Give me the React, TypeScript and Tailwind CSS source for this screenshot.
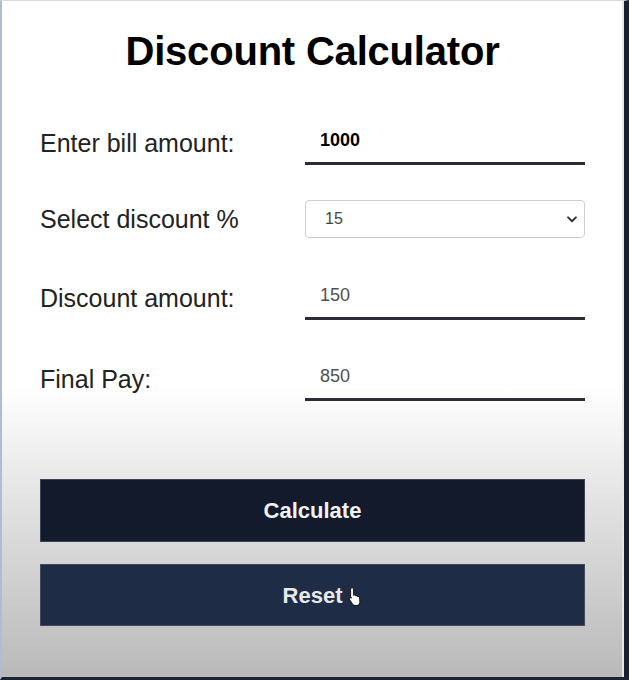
import { useState } from 'react';

function Row({ label, children, className = '' }: { label: string; children: React.ReactNode; className?: string }) {
  return (
    <div className={`flex items-center h-[44px] ${className}`}>
      <label className="w-[265px] text-[25px] text-[#222] leading-none">{label}</label>
      <div className="flex-1 h-full flex items-center">{children}</div>
    </div>
  );
}

export default function App() {
  const [bill, setBill] = useState('1000');
  const [pct, setPct] = useState('15');

  return (
    <div className="w-[629px] h-[680px] overflow-hidden border-l-2 border-l-[#b3bbcc] border-t border-t-[#d8dbe2] border-b-[3px] border-b-[#1c2333] border-r-[5px] border-r-[#1a2030] font-['Liberation_Sans',Arial,sans-serif]">
      <div className="h-full border-r-2 border-r-[#e6e6e6] bg-linear-to-b from-white from-[57%] to-[#b9b9b9] pl-[38px] pr-[37px]">
        <h1 className="pt-[30px] text-[40px] leading-none font-bold text-black text-center tracking-[-0.2px]">
          Discount Calculator
        </h1>

        <Row label="Enter bill amount:" className="mt-[50px]">
          <input
            value={bill}
            onChange={(e) => setBill(e.target.value)}
            className="w-full h-full pl-[15px] pb-[2px] bg-transparent border-b-[3px] border-[#2b2c38] text-[18px] font-bold text-black outline-none"
          />
        </Row>

        <Row label="Select discount %" className="mt-[32px]">
          <div className="relative w-full">
            <select
              value={pct}
              onChange={(e) => setPct(e.target.value)}
              className="w-full h-[38px] appearance-none bg-white border border-[#cfcfcf] rounded-[4px] pl-[19px] text-[16px] text-[#444] outline-none"
            >
              <option value="5">5</option>
              <option value="10">10</option>
              <option value="15">15</option>
              <option value="20">20</option>
            </select>
            <svg
              viewBox="0 0 12 8"
              className="absolute right-[7px] top-[16px] w-[12px] h-[7px] pointer-events-none"
            >
              <path d="M1.5 1.5 6 6l4.5-4.5" fill="none" stroke="#333" strokeWidth={2.2} strokeLinecap="round" strokeLinejoin="round" />
            </svg>
          </div>
        </Row>

        <Row label="Discount amount:" className="mt-[35px]">
          <input
            readOnly
            value="150"
            className="w-full h-full pl-[15px] pb-[2px] bg-transparent border-b-[3px] border-[#2b2c38] text-[18px] text-[#505050] outline-none"
          />
        </Row>

        <Row label="Final Pay:" className="mt-[37px]">
          <input
            readOnly
            value="850"
            className="w-full h-full pl-[15px] pb-[2px] bg-transparent border-b-[3px] border-[#2b2c38] text-[18px] text-[#505050] outline-none"
          />
        </Row>

        <div className="mt-[78px] flex flex-col gap-[22px]">
          <button className="h-[63px] w-full bg-[#121a2b] border border-[#3b4253] text-[22px] font-bold text-[#f2f2f2]">
            Calculate
          </button>
          <button className="relative h-[62px] w-full bg-[#1e2c46] border border-[#3f4a5e] text-[22px] font-bold text-[#e8e8e8]">
            Reset
            <svg viewBox="0 0 12 18" className="absolute left-[307px] top-[21px] w-[14px] h-[21px]">
              <path
                d="M3.5 1.5c.8 0 1.3.6 1.3 1.3v5l.3-.1c.7-.3 1.4 0 1.6.6.7-.2 1.4.1 1.6.7.7-.2 1.5.2 1.6.9l.3 3.3c.2 1.9-.9 3.6-2.7 3.6H6.2c-1 0-1.8-.5-2.4-1.3L1.2 11.7c-.4-.6-.2-1.3.4-1.6.5-.3 1.2-.1 1.5.4l-.9-1.2V2.8c0-.7.5-1.3 1.3-1.3z"
                fill="#fafafa"
                stroke="#1a1a1a"
                strokeWidth={0.9}
              />
            </svg>
          </button>
        </div>
      </div>
    </div>
  );
}
